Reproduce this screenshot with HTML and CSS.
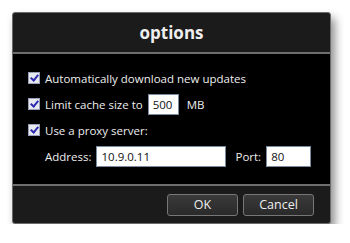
FILE: index.html
```html
<!DOCTYPE html>
<html lang="en">
<head>
  <meta charset="UTF-8">
  <title>options</title>
  <link rel="stylesheet" href="styles.css">
</head>
<body>
  <div class="dialog">
    <div class="header">options</div>
    <div class="content">
      <label class="row"><span class="check"></span><span>Automatically download new updates</span></label>
      <label class="row"><span class="check"></span><span class="label">Limit cache size to</span><span class="field small">500</span><span class="unit">MB</span></label>
      <label class="row"><span class="check"></span><span>Use a proxy server:</span></label>
      <div class="row proxy">
        <span class="label">Address:</span>
        <span class="field address">10.9.0.11</span>
        <span class="label port-label">Port:</span>
        <span class="field port">80</span>
      </div>
    </div>
    <div class="footer">
      <button class="btn">OK</button>
      <button class="btn">Cancel</button>
    </div>
  </div>
</body>
</html>
```

FILE: styles.css
```css
body {
  margin: 0;
  background-color: #fff;
  font-family: 'Open Sans', 'DejaVu Sans', sans-serif;
}
.dialog {
  margin: 12px 0 0 12px;
  width: 317px;
  background-color: #1b1b1b;
  border: 1px solid #6b6b6b;
  border-radius: 3px;
  box-shadow: 4px 6px 10px rgba(0, 0, 0, 0.45);
  color: #eee;
}
.header {
  height: 39px;
  line-height: 39px;
  text-align: center;
  font-size: 17px;
  font-weight: bold;
  border-bottom: 2px solid #6e6e6e;
}
.content {
  background-color: #000;
  padding: 11px 0 10px 15px;
  height: 109px;
  border-bottom: 2px solid #6e6e6e;
  font-size: 11.5px;
}
.row {
  display: flex;
  align-items: center;
  height: 26px;
}
.check {
  width: 10px;
  height: 10px;
  border: 1px solid #9aa0b8;
  background-color: #e8e8f0;
  margin-right: 5px;
  position: relative;
}
.check::after {
  content: "";
  position: absolute;
  left: 3px;
  top: 0px;
  width: 3px;
  height: 6px;
  border: solid #2b2bb0;
  border-width: 0 2px 2px 0;
  transform: rotate(40deg);
}
.label {
  margin-right: 5px;
}
.unit {
  margin-left: 8px;
}
.field {
  display: inline-block;
  background-color: #fff;
  color: #111;
  border: 1px solid #7a8aa0;
  height: 21px;
  line-height: 20px;
  padding: 0 4px;
  box-sizing: border-box;
}
.small {
  width: 31px;
}
.proxy {
  padding-left: 17px;
}
.address {
  width: 130px;
}
.port-label {
  margin-left: 9px;
}
.port {
  width: 45px;
}
.footer {
  height: 37px;
  display: flex;
  justify-content: flex-end;
  align-items: center;
  gap: 5px;
  padding-right: 16px;
}
.btn {
  width: 71px;
  height: 22px;
  border: 1px solid #777;
  border-radius: 3px;
  background: linear-gradient(#3a3a3a, #2a2a2a);
  color: #eee;
  font-family: 'Open Sans', 'DejaVu Sans', sans-serif;
  font-size: 12.5px;
}
```
